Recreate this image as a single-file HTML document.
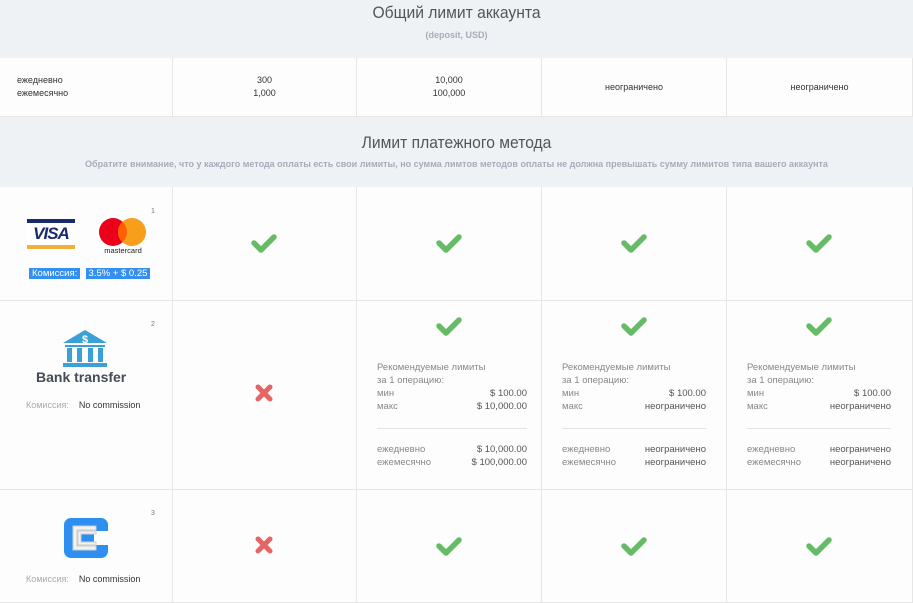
<!DOCTYPE html>
<html><head><meta charset="utf-8"><style>
*{margin:0;padding:0;box-sizing:border-box}
body{width:913px;height:603px;overflow:hidden;background:#fff;font-family:"Liberation Sans",sans-serif;position:relative;color:#333}
.a{position:absolute}
.hd{background:#eff2f4;left:0;width:913px;text-align:center;color:#555}
.h1{font-size:17px;color:#555;transform:scaleX(.92)}
.sub{font-size:9px;color:#aab;font-weight:bold}
.c{background:#fdfdfd;border-right:1px solid #e6e6e6;border-bottom:1px solid #e6e6e6;display:flex;align-items:center;justify-content:center;font-size:9px;text-align:center;line-height:13px}
.ck{width:26px;height:20px}
.lim{font-size:9.5px;color:#888;line-height:13px;width:150px}
.lim .r{display:flex;justify-content:space-between}
.lim .r span:last-child{color:#555}
.num{position:absolute;font-size:7px;color:#777}
</style></head><body>
<div class="a hd" style="top:0;height:58px"><div class="h1" style="padding-top:3px">Общий лимит аккаунта</div><div class="sub" style="margin-top:7px">(deposit, USD)</div></div>
<div class="a c" style="top:58px;left:0;width:173px;height:59px;justify-content:flex-start;text-align:left;padding-left:17px">ежедневно<br>ежемесячно</div>
<div class="a c" style="top:58px;left:173px;width:184px;height:59px">300<br>1,000</div>
<div class="a c" style="top:58px;left:357px;width:185px;height:59px">10,000<br>100,000</div>
<div class="a c" style="top:58px;left:542px;width:185px;height:59px">неограничено</div>
<div class="a c" style="top:58px;left:727px;width:186px;height:59px">неограничено</div>
<div class="a hd" style="top:117px;height:70px"><div class="h1" style="padding-top:16px">Лимит платежного метода</div><div class="sub" style="margin-top:6px">Обратите внимание, что у каждого метода оплаты есть свои лимиты, но сумма лимтов методов оплаты не должна превышать сумму лимитов типа вашего аккаунта</div></div>

<div class="a c" style="top:187px;left:0;width:173px;height:114px"></div>
<div class="a c" style="top:187px;left:173px;width:184px;height:114px"></div>
<div class="a c" style="top:187px;left:357px;width:185px;height:114px"></div>
<div class="a c" style="top:187px;left:542px;width:185px;height:114px"></div>
<div class="a c" style="top:187px;left:727px;width:186px;height:114px"></div>

<div class="a c" style="top:301px;left:0;width:173px;height:189px"></div>
<div class="a c" style="top:301px;left:173px;width:184px;height:189px"></div>
<div class="a c" style="top:301px;left:357px;width:185px;height:189px"></div>
<div class="a c" style="top:301px;left:542px;width:185px;height:189px"></div>
<div class="a c" style="top:301px;left:727px;width:186px;height:189px"></div>

<div class="a c" style="top:490px;left:0;width:173px;height:113px"></div>
<div class="a c" style="top:490px;left:173px;width:184px;height:113px"></div>
<div class="a c" style="top:490px;left:357px;width:185px;height:113px"></div>
<div class="a c" style="top:490px;left:542px;width:185px;height:113px"></div>
<div class="a c" style="top:490px;left:727px;width:186px;height:113px"></div>

<!-- row1 -->
<div class="num" style="left:151px;top:208px">1</div>
<div class="a" style="left:27px;top:219px;width:48px;height:30px;background:#fff">
<div style="height:4px;background:#1a2a6c"></div>
<div style="font:italic bold 17px 'Liberation Sans',sans-serif;color:#1a2a6c;text-align:center;line-height:22px;letter-spacing:-1px">VISA</div>
<div style="height:4px;background:#f0b03c"></div></div>
<svg class="a" style="left:98px;top:215px" width="50" height="42"><circle cx="15" cy="17" r="14" fill="#eb001b"/><circle cx="34" cy="17" r="14" fill="#f79e1b"/><path d="M24.5 6.7a14 14 0 0 1 0 20.6a14 14 0 0 1 0-20.6z" fill="#ff5f00"/><text x="25" y="38" font-size="7.5" text-anchor="middle" fill="#222" font-family="Liberation Sans">mastercard</text></svg>
<div class="a" style="left:29px;top:267px;font-size:9.5px;color:#fff;line-height:13px"><span style="background:#3390f0;padding:0 3px">Комиссия:</span>&nbsp;&nbsp;<span style="background:#3390f0;padding:0 3px">3.5% + $ 0.25</span></div>

<!-- bank -->
<div class="num" style="left:151px;top:321px">2</div>
<svg class="a" style="left:62px;top:330px" width="46" height="38"><path d="M23 0L1 13h44z" fill="#3aa0d5"/><text x="23" y="13" font-size="11" font-weight="bold" fill="#fff" text-anchor="middle" font-family="Liberation Sans">$</text><rect x="3" y="15" width="40" height="2" fill="#3aa0d5"/><rect x="5" y="18" width="5" height="14" fill="#3aa0d5"/><rect x="15" y="18" width="5" height="14" fill="#3aa0d5"/><rect x="26" y="18" width="5" height="14" fill="#3aa0d5"/><rect x="36" y="18" width="5" height="14" fill="#3aa0d5"/><rect x="1" y="33" width="44" height="4" fill="#3aa0d5"/></svg>
<div class="a" style="left:36px;top:369px;font-size:14px;font-weight:bold;color:#444c56">Bank transfer</div>
<div class="a" style="left:26px;top:400px;font-size:9px"><span style="color:#aaa">Комиссия:</span>&nbsp;&nbsp;&nbsp;&nbsp;No commission</div>

<!-- C logo -->
<div class="num" style="left:151px;top:510px">3</div>
<svg class="a" style="left:64px;top:518px" width="44" height="40"><path d="M7 0h30a7 7 0 0 1 7 7v6H30v14h14v6a7 7 0 0 1-7 7H7a7 7 0 0 1-7-7V7a7 7 0 0 1 7-7z" fill="#2d8ff0"/><path d="M9 8h23v4H13v16h19v4H9z" fill="#f2f2f2" stroke="#ccc" stroke-width="1"/><path d="M14 13h18v3H17v8h15v3H14z" fill="#f2f2f2" stroke="#ccc" stroke-width="1"/></svg>
<div class="a" style="left:26px;top:574px;font-size:9px"><span style="color:#aaa">Комиссия:</span>&nbsp;&nbsp;&nbsp;&nbsp;No commission</div>

<svg width="0" height="0" style="position:absolute"><defs><symbol id="ck" viewBox="0 0 26 20"><path d="M3 10l7 7L23 4" stroke="#66bb66" stroke-width="5.5" fill="none" stroke-linecap="round" stroke-linejoin="round"/></symbol><symbol id="x" viewBox="0 0 20 20"><path d="M4 4l12 12M16 4L4 16" stroke="#e56464" stroke-width="5" stroke-linecap="round"/></symbol></defs></svg>
<svg class="a ck" style="left:251px;top:233px"><use href="#ck"/></svg>
<svg class="a ck" style="left:436px;top:233px"><use href="#ck"/></svg>
<svg class="a ck" style="left:621px;top:233px"><use href="#ck"/></svg>
<svg class="a ck" style="left:806px;top:233px"><use href="#ck"/></svg>
<svg class="a ck" style="left:436px;top:316px"><use href="#ck"/></svg>
<svg class="a ck" style="left:621px;top:316px"><use href="#ck"/></svg>
<svg class="a ck" style="left:806px;top:316px"><use href="#ck"/></svg>
<svg class="a ck" style="left:436px;top:536px"><use href="#ck"/></svg>
<svg class="a ck" style="left:621px;top:536px"><use href="#ck"/></svg>
<svg class="a ck" style="left:806px;top:536px"><use href="#ck"/></svg>
<svg class="a" style="left:254px;top:383px" width="20" height="20"><use href="#x"/></svg>
<svg class="a" style="left:254px;top:535px" width="20" height="20"><use href="#x"/></svg>

<div class="a lim" style="left:377px;top:361px">Рекомендуемые лимиты<br>за 1 операцию:<div class="r"><span>мин</span><span>$ 100.00</span></div><div class="r"><span>макс</span><span>$ 10,000.00</span></div><div style="border-top:1px solid #e2e2e2;margin:15px 0 14px"></div><div class="r"><span>ежедневно</span><span>$ 10,000.00</span></div><div class="r"><span>ежемесячно</span><span>$ 100,000.00</span></div></div>
<div class="a lim" style="left:562px;top:361px;width:144px">Рекомендуемые лимиты<br>за 1 операцию:<div class="r"><span>мин</span><span>$ 100.00</span></div><div class="r"><span>макс</span><span>неограничено</span></div><div style="border-top:1px solid #e2e2e2;margin:15px 0 14px"></div><div class="r"><span>ежедневно</span><span>неограничено</span></div><div class="r"><span>ежемесячно</span><span>неограничено</span></div></div>
<div class="a lim" style="left:747px;top:361px;width:144px">Рекомендуемые лимиты<br>за 1 операцию:<div class="r"><span>мин</span><span>$ 100.00</span></div><div class="r"><span>макс</span><span>неограничено</span></div><div style="border-top:1px solid #e2e2e2;margin:15px 0 14px"></div><div class="r"><span>ежедневно</span><span>неограничено</span></div><div class="r"><span>ежемесячно</span><span>неограничено</span></div></div>
</body></html>
